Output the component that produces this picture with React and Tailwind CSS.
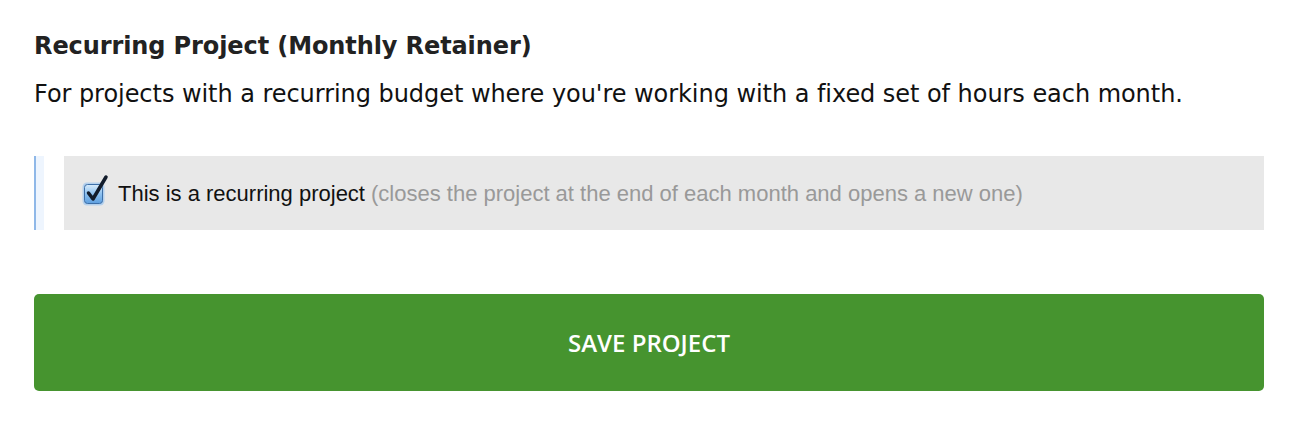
export default function App() {
  return (
    <div className="w-[1292px] h-[422px] bg-white pl-[34px] pr-[28px] pt-[31px]">
      <h2 className="text-[24px] leading-[30px] font-bold text-[#222] font-['DejaVu_Sans',Verdana,sans-serif] tracking-[-0.1px]">
        Recurring Project (Monthly Retainer)
      </h2>
      <p className="mt-[19px] text-[24px] leading-[28px] text-[#111] font-['DejaVu_Sans',Verdana,sans-serif] tracking-[-0.05px]">
        For projects with a recurring budget where you're working with a fixed set of hours each month.
      </p>

      <div className="mt-[48px] flex h-[74px]">
        <div className="w-[2px] bg-[#8fb8e8]" />
        <div className="w-[8px] bg-[#eef5fe]" />
        <div className="w-[20px]" />
        <div className="flex-1 bg-[#e8e8e8] flex items-center pl-[18px]">
          <label className="flex items-center text-[22px] font-['Liberation_Sans',Arial,sans-serif]">
            <CheckBox />
            <span className="ml-[8px] text-[#111]">This is a recurring project</span>
            <span className="ml-[6px] text-[#999]">(closes the project at the end of each month and opens a new one)</span>
          </label>
        </div>
      </div>

      <button className="mt-[64px] w-full h-[97px] rounded-[5px] bg-[#46942f] text-white text-[24px] font-semibold font-['Open_Sans',sans-serif]">
        SAVE PROJECT
      </button>
    </div>
  );
}

function CheckBox() {
  return (
    <svg width="28" height="34" viewBox="0 0 28 34" className="shrink-0 -mt-[6px]">
      <defs>
        <linearGradient id="cbg" x1="0" y1="0" x2="0" y2="1">
          <stop offset="0" stopColor="#d9ecfb" />
          <stop offset="0.5" stopColor="#8cc0ef" />
          <stop offset="1" stopColor="#5e9fe0" />
        </linearGradient>
      </defs>
      <rect x="0.5" y="9.5" width="22" height="23" rx="4.5" fill="#9fc8f0" opacity="0.7" />
      <rect x="2.5" y="11.5" width="18" height="19" rx="3" fill="url(#cbg)" stroke="#3d6fa8" strokeWidth="1" />
      <path d="M6.5 20 L11 26 L24 4" fill="none" stroke="#121c2b" strokeWidth="3.5" strokeLinecap="round" strokeLinejoin="round" />
    </svg>
  );
}
